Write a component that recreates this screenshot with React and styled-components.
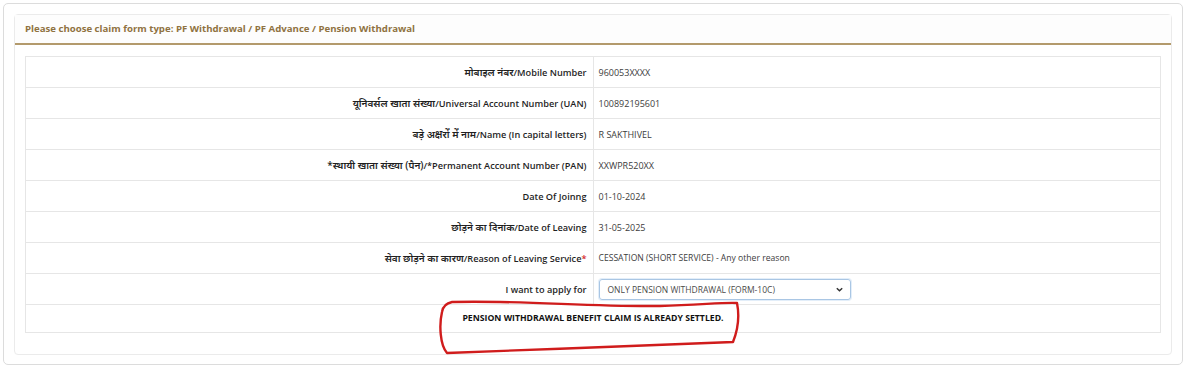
import React from 'react';
import styled, { createGlobalStyle } from 'styled-components';

const GlobalStyle = createGlobalStyle`
  body {
    margin: 0;
    background: #fff;
    font-family: "Open Sans", "Noto Sans", "Noto Sans Devanagari", sans-serif;
  }
`;

const Page = styled.div`
  position: relative;
  width: 1200px;
  box-sizing: border-box;
  padding: 3px 17px 3px 3px;
`;

const Card = styled.div`
  border: 1px solid #dcdcdc;
  border-radius: 5px;
  padding: 10px 10px 9px;
`;

const Panel = styled.div`
  border: 1px solid #ebebeb;
  border-radius: 4px;
`;

const PanelHeading = styled.div`
  height: 28px;
  line-height: 28px;
  padding: 0 10px;
  border-bottom: 2px solid #b39a6c;
  background: #fdfdfd;
  color: #8f7241;
  font-size: 9.65px;
  font-weight: 700;
`;

const PanelBody = styled.div`
  padding: 11px 10px 21px;
`;

const Table = styled.table`
  width: 100%;
  border-collapse: collapse;
  border: 1px solid #e6e6e6;
  font-size: 9.2px;
`;

const Row = styled.tr`
  height: 31px;
  border-bottom: 1px solid #e6e6e6;
`;

const Label = styled.td`
  width: 50%;
  text-align: right;
  padding: 0 6px;
  font-weight: 600;
  color: #1f1f1f;
  border-right: 1px solid #e6e6e6;
`;

const Hindi = styled.span`
  font-size: 10px;
  font-weight: 600;
`;

const Value = styled.td`
  padding: 0 5px;
  color: #3c3c3c;
  font-size: ${(p) => (p.$caps ? '8.6px' : '9px')};
`;

const Required = styled.span`
  color: #d42a2a;
`;

const SelectBox = styled.div`
  display: flex;
  align-items: center;
  justify-content: space-between;
  width: 252px;
  height: 21px;
  box-sizing: border-box;
  padding: 0 6px 0 8px;
  border: 1px solid #a9c6e4;
  border-radius: 3px;
  box-shadow: 0 0 0 1px #e3eef9;
  color: #4a4a4a;
  font-size: 8.5px;
`;

const MessageRow = styled.tr`
  height: 28px;
  border-bottom: 1px solid #e6e6e6;
`;

const Message = styled.td`
  text-align: center;
  font-weight: 700;
  color: #111;
  font-size: 8.7px;
  padding-bottom: 2px;
`;

const Scribble = styled.svg`
  position: absolute;
  left: 0;
  top: 0;
  pointer-events: none;
`;

const rows = [
  ['मोबाइल नंबर', '/Mobile Number', '960053XXXX'],
  ['यूनिवर्सल खाता संख्या', '/Universal Account Number (UAN)', '100892195601'],
  ['बड़े अक्षरों में नाम', '/Name (In capital letters)', 'R SAKTHIVEL'],
  ['*स्थायी खाता संख्या (पैन)', '/*Permanent Account Number (PAN)', 'XXWPR520XX'],
  ['', 'Date Of Joinng', '01-10-2024'],
  ['छोड़ने का दिनांक', '/Date of Leaving', '31-05-2025'],
];

export default function App() {
  return (
    <>
      <GlobalStyle />
      <Page>
        <Card>
          <Panel>
            <PanelHeading>
              Please choose claim form type: PF Withdrawal / PF Advance / Pension Withdrawal
            </PanelHeading>
            <PanelBody>
              <Table>
                <tbody>
                  {rows.map(([hindi, english, value]) => (
                    <Row key={english}>
                      <Label>
                        {hindi && <Hindi>{hindi}</Hindi>}
                        {english}
                      </Label>
                      <Value>{value}</Value>
                    </Row>
                  ))}
                  <Row>
                    <Label>
                      <Hindi>सेवा छोड़ने का कारण</Hindi>/Reason of Leaving Service<Required>*</Required>
                    </Label>
                    <Value $caps>CESSATION (SHORT SERVICE) - Any other reason</Value>
                  </Row>
                  <Row>
                    <Label>I want to apply for</Label>
                    <Value>
                      <SelectBox>
                        <span>ONLY PENSION WITHDRAWAL (FORM-10C)</span>
                        <svg width="9" height="9" viewBox="0 0 10 10">
                          <path d="M2 3.5 L5 6.5 L8 3.5" fill="none" stroke="#333" strokeWidth="1.6" />
                        </svg>
                      </SelectBox>
                    </Value>
                  </Row>
                  <MessageRow>
                    <Message colSpan={2}>PENSION WITHDRAWAL BENEFIT CLAIM IS ALREADY SETTLED.</Message>
                  </MessageRow>
                </tbody>
              </Table>
            </PanelBody>
          </Panel>
        </Card>
        <Scribble width="1200" height="368" viewBox="0 0 1200 368">
          <path
            d="M452 302 C 520 300, 590 307, 660 306 C 700 305, 725 302, 737 303 C 740 318, 737 332, 733 342 C 650 346, 540 349, 447 353 C 440 345, 439 325, 442 312 C 443 306, 447 303, 452 302 Z"
            fill="none"
            stroke="#d01c1c"
            strokeWidth="2.4"
            strokeLinejoin="round"
          />
        </Scribble>
      </Page>
    </>
  );
}
